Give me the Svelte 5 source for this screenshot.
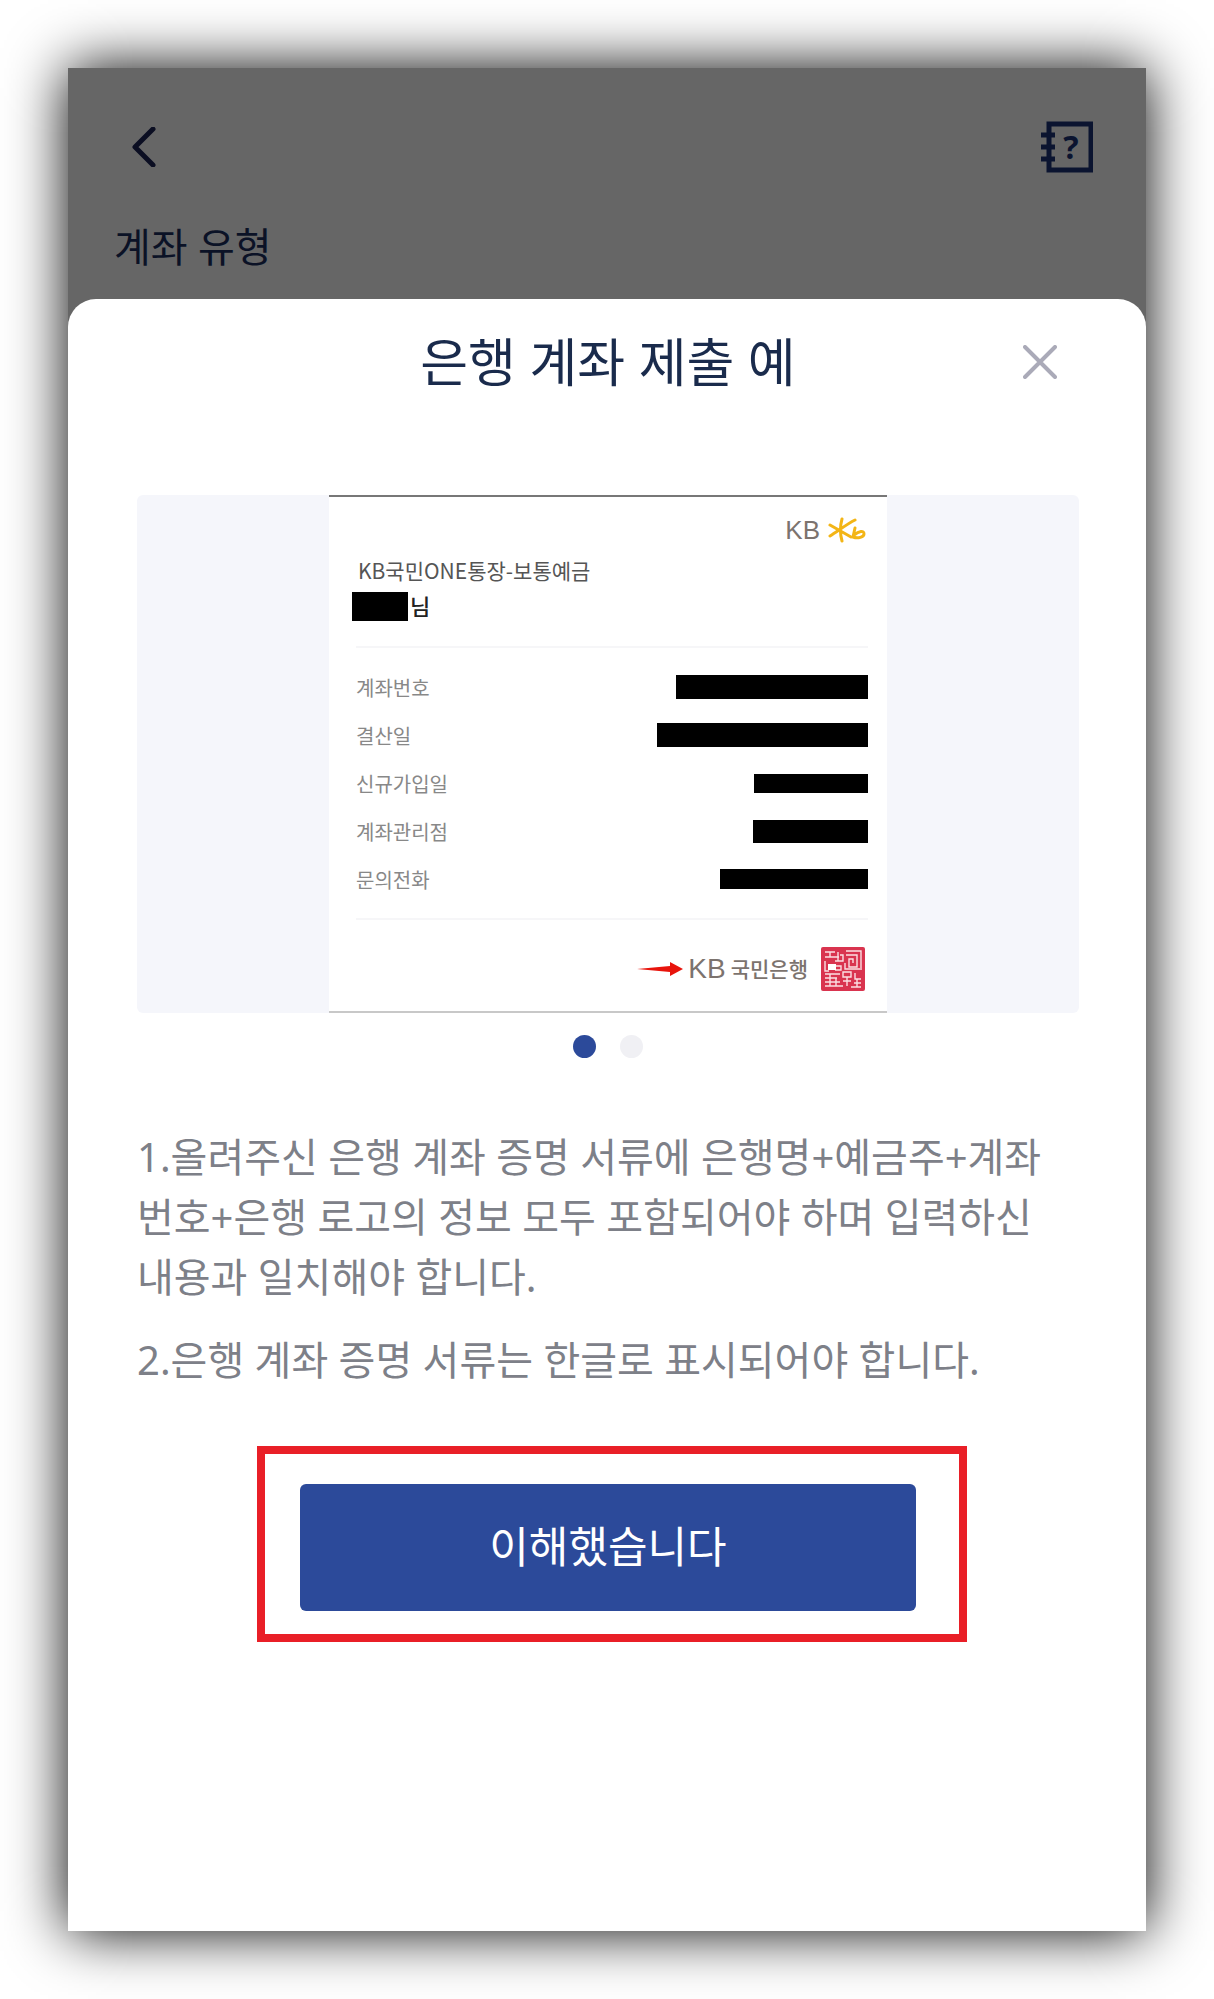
<script>
  // rows of the sample passbook, values are redacted bars
  const rows = [
    { label: "계좌번호", width: 192, height: 24 },
    { label: "결산일", width: 211, height: 24 },
    { label: "신규가입일", width: 114, height: 19 },
    { label: "계좌관리점", width: 115, height: 23 },
    { label: "문의전화", width: 148, height: 20 },
  ];

  const slides = [0, 1];
  let current = $state(0);
  let open = $state(true);
</script>

<main class="screen">
  <header class="topbar">
    <div class="topbar__row">
      <button class="icon-btn" aria-label="뒤로">
        <svg width="24" height="40" viewBox="0 0 24 40">
          <path d="M21 2 3 20l18 18" fill="none" stroke="#0b0e22" stroke-width="5" stroke-linecap="round" stroke-linejoin="round" />
        </svg>
      </button>
      <button class="icon-btn" aria-label="도움말">
        <svg width="52" height="52" viewBox="0 0 52 52">
          <rect x="8" y="3" width="42" height="46" fill="none" stroke="#0b1430" stroke-width="5" />
          <path d="M0 14h14M0 26h14M0 38h14" stroke="#0b1430" stroke-width="5" />
          <text x="30" y="38" text-anchor="middle" class="help-mark">?</text>
        </svg>
      </button>
    </div>
    <p class="topbar__label">계좌 유형</p>
  </header>

  {#if open}
    <section class="sheet" role="dialog" aria-labelledby="sheet-title">
      <div class="sheet__header">
        <h1 id="sheet-title" class="sheet__title">은행 계좌 제출 예</h1>
        <button class="icon-btn sheet__close" aria-label="닫기" onclick={() => (open = false)}>
          <svg width="34" height="34" viewBox="0 0 34 34">
            <path d="M2 2l30 30M32 2 2 32" stroke="#aaaab8" stroke-width="4" stroke-linecap="round" />
          </svg>
        </button>
      </div>

      <div class="preview">
        <article class="passbook">
          <div class="passbook__brand">
            <span class="kb">KB</span>
            <svg width="38" height="26" viewBox="0 0 38 26" fill="none" stroke="#f3b516" stroke-width="3" stroke-linecap="round">
              <path d="M14 2C12 9 12 17 14 24M2 8l21 12M2 19C10 14 19 7 27 3" />
              <path d="M27 11l-2 9c5 2 11 0 11-3 0-4-5-3-10 1" />
            </svg>
          </div>
          <p class="passbook__product">KB국민ONE통장-보통예금</p>
          <p class="passbook__owner"><span class="passbook__mask"></span>님</p>

          <dl class="passbook__rows">
            {#each rows as row}
              <div class="passbook__row">
                <dt>{row.label}</dt>
                <dd style="width:{row.width}px;height:{row.height}px"></dd>
              </div>
            {/each}
          </dl>

          <div class="passbook__footer">
            <svg width="46" height="16" viewBox="0 0 46 16">
              <path d="M0 8 33 5V1l13 7-13 7v-4z" fill="#e8140c" />
            </svg>
            <span class="kb kb--large">KB</span>
            <span class="passbook__bank">국민은행</span>
            <svg class="passbook__stamp" width="44" height="44" viewBox="0 0 44 44">
              <rect width="44" height="44" rx="2" fill="#d9344f" />
              <path
                d="M4 5h10M9 5v5M4 10h14M4 14v10h4M17 5v9M14 14h8v-6h-3M14 19h6v4h-6M25 4h15v19M25 8h11v12h-8v-8h4v4M4 27h15M4 31h12M4 35h15M4 39h18M9 27v12M15 31v8M22 25h8v5h-8zM34 26v6h6M22 34h8M26 30v9M33 36h7M30 40h10M36 32v8M24 16v6h15"
                fill="none"
                stroke="#fbdfe3"
                stroke-width="1.400"
              />
              <rect x="7" y="17" width="8" height="6" fill="#fff" />
            </svg>
          </div>
        </article>
      </div>

      <div class="dots">
        {#each slides as slide}
          <button
            class="dot"
            class:dot--active={slide === current}
            aria-label="슬라이드 {slide + 1}"
            onclick={() => (current = slide)}
          ></button>
        {/each}
      </div>

      <div class="notes">
        <p>1.올려주신 은행 계좌 증명 서류에 은행명+예금주+계좌번호+은행 로고의 정보 모두 포함되어야 하며 입력하신 내용과 일치해야 합니다.</p>
        <p>2.은행 계좌 증명 서류는 한글로 표시되어야 합니다.</p>
      </div>

      <div class="confirm">
        <button class="confirm__btn" onclick={() => (open = false)}>이해했습니다</button>
      </div>
    </section>
  {/if}
</main>

<style>
  :global(body) {
    background: #fff;
    font-family: "Noto Sans", "Noto Sans CJK KR", sans-serif;
  }

  p,
  h1,
  dl,
  dd {
    margin: 0;
  }

  button {
    border: none;
    padding: 0;
    font-family: inherit;
    cursor: pointer;
  }

  svg {
    display: block;
  }

  .screen {
    display: flex;
    flex-direction: column;
    box-sizing: border-box;
    min-height: calc(100vh - 136px);
    margin: 68px;
    background: #666;
    box-shadow: 0 0 56px #000;
  }

  /* page behind the sheet */
  .topbar {
    padding: 53px 48px 22px 46px;
  }
  .topbar__row {
    display: flex;
    align-items: center;
    justify-content: space-between;
    padding: 0 5px 0 18px;
  }
  .topbar__label {
    margin-top: 44px;
    font-size: 40px;
    line-height: 60px;
    color: #0b1226;
  }
  .icon-btn {
    background: none;
  }
  .help-mark {
    font-family: "Noto Sans", sans-serif;
    font-size: 32px;
    font-weight: 700;
    fill: #0b1430;
  }

  .sheet {
    flex: 1;
    padding: 28px 67px 68px 69px;
    border-radius: 28px 28px 0 0;
    background: #fff;
  }
  .sheet__header {
    display: grid;
    grid-template-columns: 1fr auto 1fr;
    align-items: center;
  }
  .sheet__title {
    grid-column: 2;
    font-size: 52px;
    font-weight: 400;
    line-height: 70px;
    color: #1a2b4c;
  }
  .sheet__close {
    justify-self: end;
    margin-right: 22px;
  }

  .preview {
    display: flex;
    justify-content: center;
    margin-top: 98px;
    border-radius: 6px;
    background: #f5f6fb;
  }

  /* sample passbook */
  .passbook {
    box-sizing: border-box;
    width: 558px;
    padding: 20px 19px 20px 27px;
    border-top: 2px solid #777;
    border-bottom: 2px solid #c8c8c8;
    background: #fff;
    font-size: 20px;
  }
  .passbook__brand {
    display: flex;
    align-items: center;
    justify-content: flex-end;
    gap: 8px;
    padding-right: 2px;
  }
  .kb {
    font-family: "Liberation Sans", sans-serif;
    font-size: 26px;
    line-height: 26px;
    color: #7c736e;
  }
  .kb--large {
    font-size: 28px;
  }
  .passbook__product {
    margin-top: 13px;
    padding-left: 2px;
    font-family: "Noto Sans CJK KR", sans-serif;
    font-size: 21px;
    line-height: 28px;
    color: #555;
  }
  .passbook__owner {
    display: flex;
    align-items: center;
    gap: 2px;
    margin: 8px 0 0 -4px;
    font-size: 22px;
    font-weight: 500;
    line-height: 29px;
    color: #222;
  }
  .passbook__mask {
    width: 56px;
    height: 29px;
    background: #000;
  }
  .passbook__rows {
    margin-top: 25px;
    padding: 15px 0;
    border-top: 2px solid #f6f6f8;
    border-bottom: 2px solid #f6f6f8;
  }
  .passbook__row {
    display: flex;
    align-items: center;
    justify-content: space-between;
    height: 48px;
    color: #888;
  }
  .passbook__row dd {
    background: #000;
  }
  .passbook__footer {
    display: flex;
    align-items: center;
    justify-content: flex-end;
    gap: 5px;
    margin-top: 27px;
    padding-right: 3px;
  }
  .passbook__bank {
    font-size: 21px;
    font-weight: 500;
    line-height: 26px;
    color: #7c736e;
  }
  .passbook__stamp {
    margin-left: 8px;
  }

  .dots {
    display: flex;
    justify-content: center;
    gap: 24px;
    margin-top: 22px;
  }
  .dot {
    width: 23px;
    height: 23px;
    border-radius: 50%;
    background: #f0f0f4;
  }
  .dot--active {
    background: #2c4a9a;
  }

  .notes {
    display: grid;
    gap: 23px;
    margin-top: 69px;
    padding-right: 24px;
    font-size: 40px;
    line-height: 60px;
    color: #7d8088;
  }

  .confirm {
    position: relative;
    width: 616px;
    max-width: 100%;
    margin: 94px auto 0;
  }
  /* red marker frame around the button */
  .confirm::after {
    content: "";
    position: absolute;
    inset: -38px -51px -31px -43px;
    border: 8px solid #e91f27;
    pointer-events: none;
  }
  .confirm__btn {
    width: 100%;
    height: 127px;
    padding-bottom: 6px;
    border-radius: 6px;
    background: #2c4a9a;
    font-size: 43px;
    color: #fff;
  }
</style>
